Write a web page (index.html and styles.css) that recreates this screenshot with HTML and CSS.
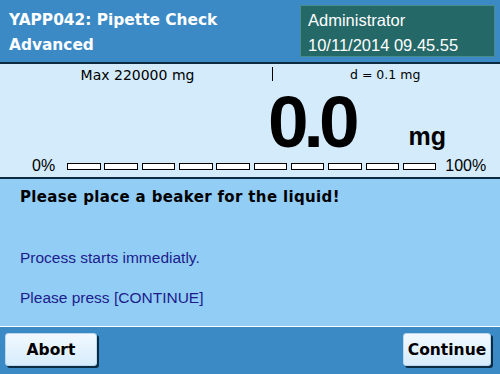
FILE: index.html
```html
<!DOCTYPE html>
<html>
<head>
<meta charset="utf-8">
<link rel="stylesheet" href="styles.css">
</head>
<body>
<div class="screen">
  <div class="header">
    <div class="title">YAPP042: Pipette Check<br>Advanced</div>
    <div class="user">
      <div>Administrator</div>
      <div>10/11/2014 09.45.55</div>
    </div>
  </div>
  <div class="weigh">
    <div class="info">
      <div class="max">Max 220000 mg</div>
      <div class="tick"></div>
      <div class="d">d = 0.1 mg</div>
    </div>
    <div class="value">
      <span class="num">0.0</span>
      <span class="unit">mg</span>
    </div>
    <div class="bar">
      <span class="pct">0%</span>
      <div class="segs">
        <i></i><i></i><i></i><i></i><i></i><i></i><i></i><i></i><i></i><i></i>
      </div>
      <span class="pct">100%</span>
    </div>
  </div>
  <div class="msg">
    <div class="head">Please place a beaker for the liquid!</div>
    <div class="line l1">Process starts immediatly.</div>
    <div class="line l2">Please press [CONTINUE]</div>
  </div>
  <div class="footer">
    <div class="btn abort">Abort</div>
    <div class="btn cont">Continue</div>
  </div>
</div>
</body>
</html>
```
FILE: styles.css
```css
html, body {
  margin: 0;
  padding: 0;
}
body {
  width: 500px;
  height: 374px;
  overflow: hidden;
  background: #3b8ac6;
  font-family: "Liberation Sans", Arial, sans-serif;
}
.screen {
  width: 500px;
  height: 374px;
  display: flex;
  flex-direction: column;
}
.header {
  height: 64px;
  flex: none;
  box-sizing: border-box;
  background: #3b8ac6;
  display: flex;
  justify-content: space-between;
  align-items: flex-start;
  padding: 5px 5px 0 9px;
  border-bottom: 2px solid #0c2a40;
}
.title {
  font-family: "DejaVu Sans", sans-serif;
  font-weight: bold;
  font-size: 15.4px;
  line-height: 25px;
  color: #fff;
  padding-top: 3px;
}
.user {
  width: 195px;
  height: 52px;
  box-sizing: border-box;
  background: #256868;
  border: 1px solid #4a8c8c;
  color: #fff;
  font-size: 16.5px;
  line-height: 25px;
  padding: 2px 0 0 7px;
}
.weigh {
  height: 113px;
  flex: none;
  background: #d3ebfb;
  display: flex;
  flex-direction: column;
}
.info {
  display: flex;
  height: 22px;
  font-family: "DejaVu Sans", sans-serif;
  line-height: 22px;
  color: #000;
}
.max {
  width: 272px;
  text-align: center;
  font-size: 14px;
  padding-left: 3px;
  box-sizing: border-box;
}
.tick {
  width: 1px;
  height: 14px;
  background: #000;
  margin-top: 3px;
}
.d {
  flex: 1;
  padding-left: 77px;
  font-size: 12.5px;
}
.value {
  height: 68px;
  margin-top: 2px;
  display: flex;
  align-items: flex-end;
  padding-left: 268px;
}
.num {
  font-size: 73px;
  font-weight: bold;
  line-height: 68px;
  letter-spacing: -5px;
}
.unit {
  font-size: 25px;
  font-weight: bold;
  margin-left: 54px;
  line-height: 24px;
  margin-bottom: 8px;
}
.bar {
  display: flex;
  align-items: center;
  height: 20px;
  padding-left: 32px;
}
.pct {
  font-size: 16px;
  color: #000;
}
.segs {
  display: flex;
  gap: 3.8px;
  margin: 0 9px 0 12px;
}
.segs i {
  display: block;
  box-sizing: border-box;
  width: 33.5px;
  height: 7px;
  border: 1px solid #000;
  background: #fff;
}
.msg {
  flex: 1;
  background: #92cdf6;
  border-top: 2px solid #0c2a40;
  border-bottom: 1px solid #ffffff;
  padding: 9px 0 0 20px;
}
.head {
  font-family: "DejaVu Sans", sans-serif;
  font-weight: bold;
  font-size: 15px;
  letter-spacing: 0.35px;
  color: #000;
  line-height: 18px;
}
.line {
  color: #1c1c8c;
  font-size: 15.5px;
  line-height: 18px;
}
.l1 { margin-top: 43px; }
.l2 { margin-top: 22px; }
.footer {
  height: 47px;
  flex: none;
  background: #3b8ac6;
  display: flex;
  justify-content: space-between;
  align-items: flex-start;
  padding: 6px 9px 0 5px;
  box-sizing: border-box;
}
.btn {
  height: 33px;
  box-sizing: border-box;
  background: linear-gradient(#f2f9ff, #d6ecfc);
  border-radius: 3px;
  border: 1px solid #b8d8f0;
  box-shadow: 2px 2px 0 #0c2a40;
  font-family: "DejaVu Sans", sans-serif;
  font-weight: bold;
  font-size: 15.5px;
  color: #000;
  display: flex;
  align-items: center;
  justify-content: center;
}
.abort { width: 92px; }
.cont { width: 88px; }
```
